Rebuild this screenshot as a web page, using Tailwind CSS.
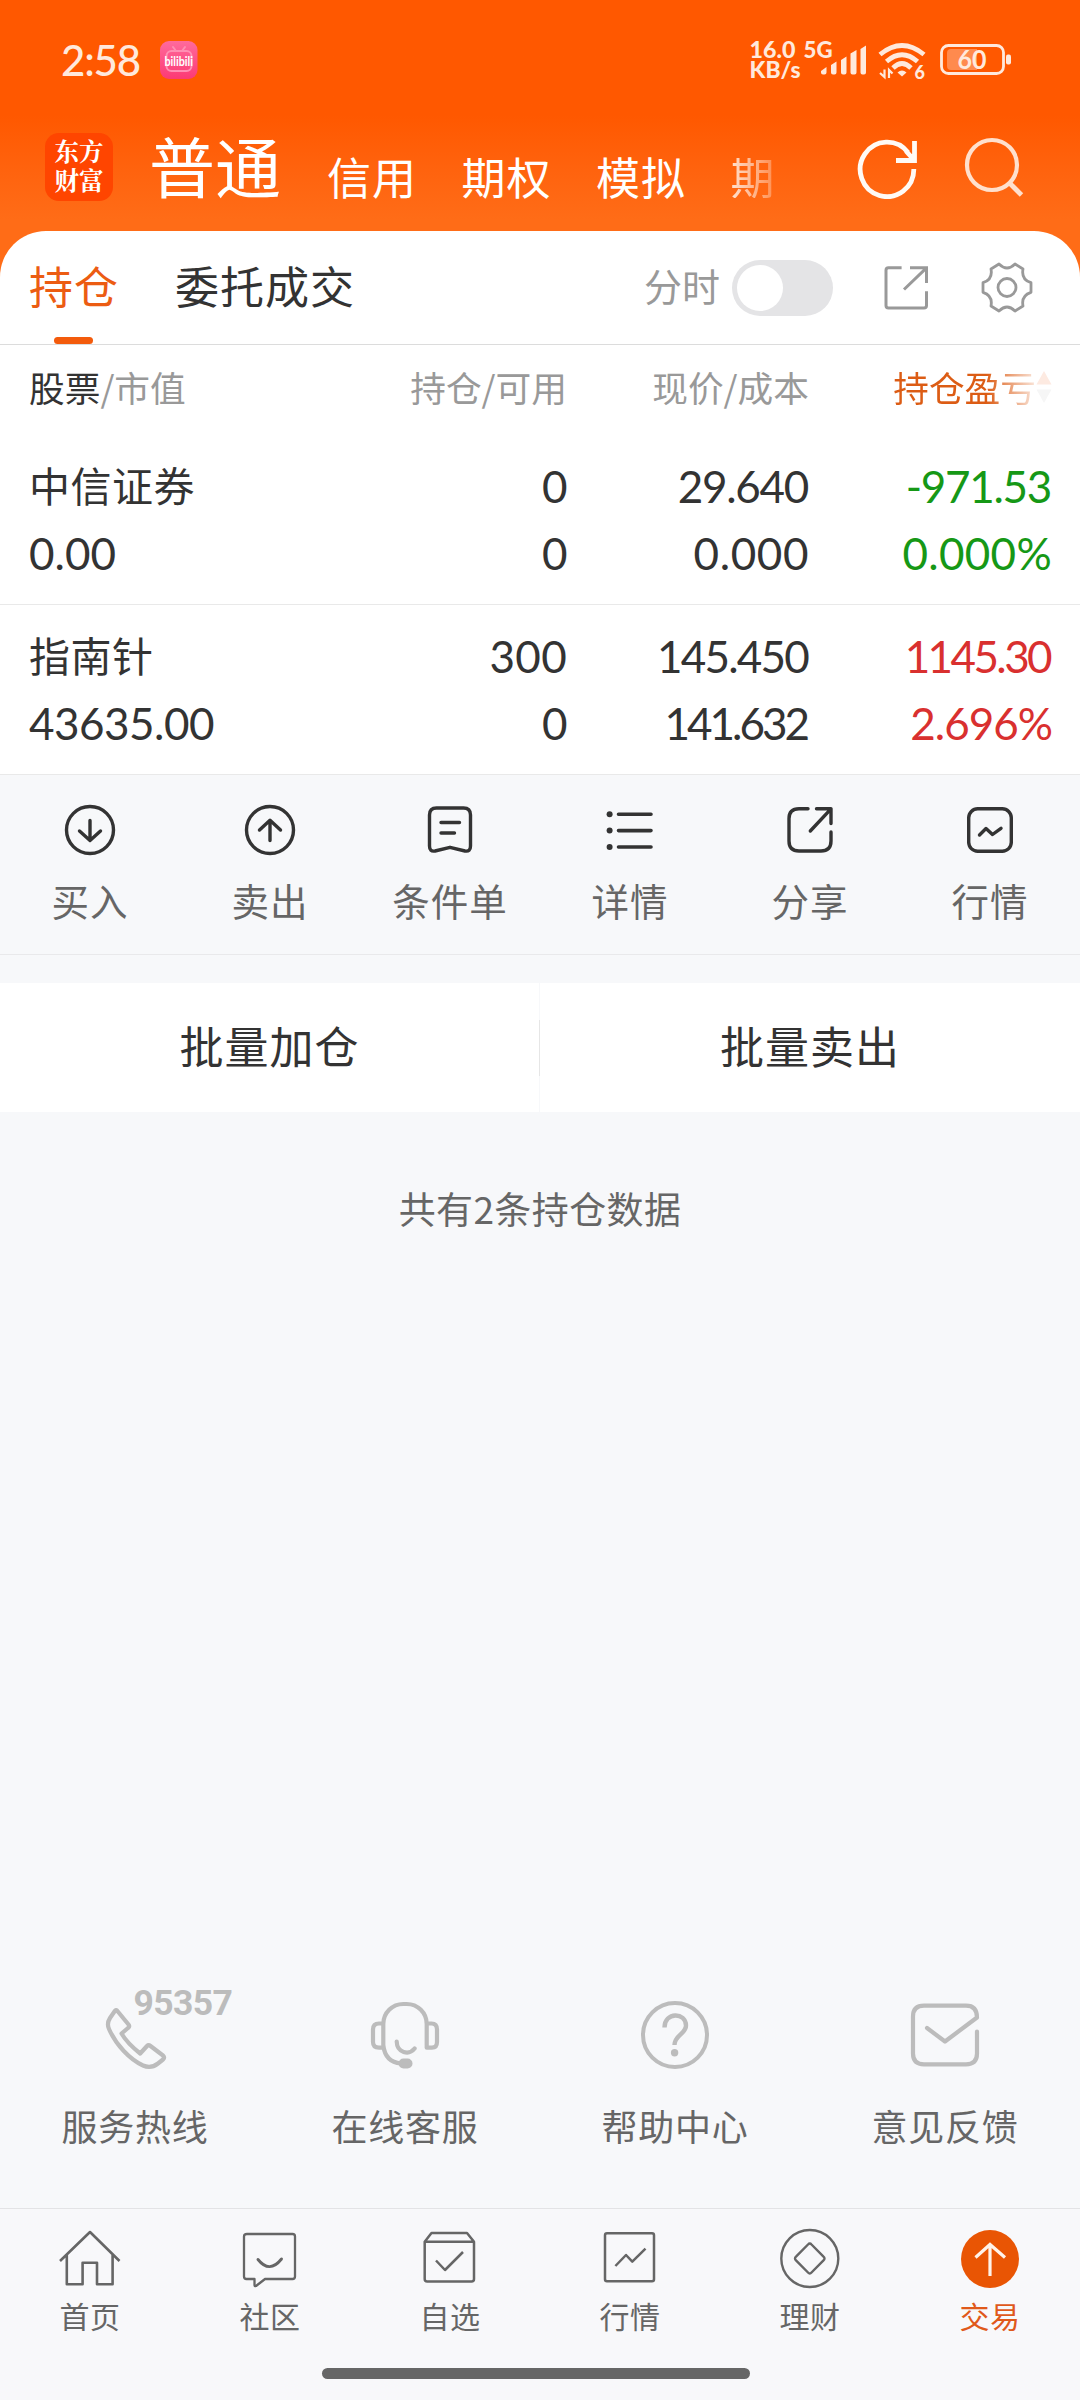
<!DOCTYPE html>
<html lang="zh-CN">
<head>
<meta charset="utf-8">
<title>持仓</title>
<script src="https://cdn.jsdelivr.net/npm/@tailwindcss/browser@4"></script>
</head>
<body class="bg-[#f7f8fa]">
<div class="flex h-[2400px] w-[1080px] flex-col overflow-hidden bg-[#f7f8fa] font-['Noto_Sans_CJK_SC',sans-serif] text-[#333] leading-none whitespace-nowrap">

  <header class="h-[231px] shrink-0 bg-linear-to-b from-[#ff5800] from-50% to-[#ff6c17] to-95%">
    <!-- status bar -->
    <div class="flex h-[120px] items-center pl-[61px] pr-[68px]">
      <span class="w-[99px] font-['Lato',sans-serif] text-[42px] font-medium tracking-[-1.2px] text-[#ffe9dc]">2:58</span>
      <svg class="overflow-visible" width="38" height="38" viewBox="0 0 38 38">
        <defs><linearGradient id="pk" x1="0" y1="0" x2="0" y2="1"><stop offset="0" stop-color="#ff6a9c"/><stop offset="1" stop-color="#fc3a74"/></linearGradient></defs>
        <rect width="37.500" height="38" rx="9" fill="url(#pk)"/>
        <g fill="none" stroke="#ff8fb3" stroke-width="2" stroke-linecap="round"><rect x="6.500" y="10" width="25" height="20" rx="5"/><path d="M13 6l3 4M25 6l-3 4"/></g>
        <text x="4.500" y="24.500" textLength="28.500" lengthAdjust="spacingAndGlyphs" font-family="Lato" font-size="14" font-weight="700" fill="#fff">bilibili</text>
      </svg>
      <svg class="ml-auto overflow-visible" width="264" height="44" viewBox="748 38 264 44" fill="#ffe9dc" font-family="Lato" font-weight="900">
        <text x="749.500" y="57.500" font-size="22.500" textLength="46" lengthAdjust="spacingAndGlyphs">16.0</text>
        <text x="749.500" y="78" font-size="22" textLength="51" lengthAdjust="spacingAndGlyphs">KB/s</text>
        <text x="803.500" y="57.500" font-size="22" textLength="29" lengthAdjust="spacingAndGlyphs">5G</text>
        <path d="M821 71l5.500-4v5.500a2 2 0 0 1-2 2h-1.500a2 2 0 0 1-2-2zM831 65l5.500-3.500v11a2 2 0 0 1-2 2h-1.500a2 2 0 0 1-2-2zM841 60l5.500-3.500v16a2 2 0 0 1-2 2h-1.500a2 2 0 0 1-2-2zM850.500 53.500l6-3.500v22.500a2 2 0 0 1-2 2h-2a2 2 0 0 1-2-2zM860.500 49l5.500-3.500v27a2 2 0 0 1-2 2h-1.500a2 2 0 0 1-2-2z"/>
        <g fill="none" stroke="#ffe9dc" stroke-width="4.800"><path d="M880 54.500Q902 36.500 924 54.500"/><path d="M886.500 61.500Q902 48 917.500 61.500"/><path d="M893 68Q902 59 911 68"/></g>
        <path d="M897.500 72.500q4.500-4 9 0l-4.500 4z"/>
        <path d="M884.500 69.500v7.500l-4.500-4M889 78v-8l3.500 3.500" fill="none" stroke="#ffe9dc" stroke-width="2.200"/>
        <text x="914.500" y="78.500" font-size="18">6</text>
        <rect x="941.500" y="45.500" width="62" height="28" rx="7" fill="none" stroke="#ffe9dc" stroke-width="2.800"/>
        <path d="M947 53a4 4 0 0 1 4-4h26v21h-26a4 4 0 0 1-4-4z" fill="#ff8a4e"/>
        <rect x="1006" y="54.500" width="5" height="10" rx="2"/>
        <text x="957.500" y="69" font-size="26" font-weight="700" textLength="29" lengthAdjust="spacingAndGlyphs">60</text>
      </svg>
    </div>
    <!-- account types -->
    <div class="flex h-[94px] items-center pl-[45px] pr-[55px] text-white">
      <div class="flex h-[68px] w-[68px] flex-col items-center justify-center rounded-[14px] bg-[#ff4500] pb-[4px] font-['Noto_Serif_CJK_SC','Noto_Sans_CJK_SC',serif] text-[24.5px] leading-[29px] font-bold"><span>东方</span><span>财富</span></div>
      <span class="ml-[36px] pb-[6px] text-[66px] leading-[66px]">普通</span>
      <nav class="ml-[46px] flex gap-[44.500px] pt-[18px] text-[44px] tracking-[1px]">
        <span>信用</span><span>期权</span><span>模拟</span>
        <span class="bg-linear-to-r from-white/80 to-white/25 bg-clip-text text-transparent">期</span>
      </nav>
      <svg class="ml-auto" width="170" height="64" viewBox="856 135 170 64" fill="none">
        <path d="M914.800 169A26.800 27.200 0 1 1 909 152.500M897 160.500H915.500V141M915 160L907 151" stroke="#fffaf5" stroke-width="4.800"/>
        <circle cx="993" cy="165" r="25" stroke="#ffe0cd" stroke-width="4.200"/><path d="M1010.500 183L1022.500 195" stroke="#ffe0cd" stroke-width="4.800"/>
      </svg>
    </div>
  </header>

  <div class="shrink-0 bg-[#ff6c17]">
    <div class="rounded-t-[46px] bg-white">
      <!-- tabs -->
      <div class="flex h-[114px] items-center border-b border-[#dcdcdc] pl-[29px] pr-[47px]">
        <div class="relative flex h-full items-center pb-[6px] text-[44px] tracking-[1px] text-[#ec5c12]">持仓<i class="absolute bottom-0 left-[25px] h-[7px] w-[39px] rounded-full bg-[#f35b0c]"></i></div>
        <span class="ml-[56px] pb-[6px] text-[44px] tracking-[1px]">委托成交</span>
        <span class="ml-auto pb-[5px] text-[38px]  text-[#999]">分时</span>
        <div class="ml-[12px] flex h-14 w-[101px] items-center rounded-full bg-[#e4e4e6] pl-[5px]"><i class="size-[46px] rounded-full bg-white"></i></div>
        <svg class="ml-[50px]" width="46" height="46" viewBox="883 264.500 46 46" fill="none" stroke="#999" stroke-width="3"><path d="M901.600 267.300H888.500a2.500 2.500 0 0 0-2.500 2.500V305a2.500 2.500 0 0 0 2.500 2.500H924a2.500 2.500 0 0 0 2.500-2.500V290.700M910 267.300H926.500V282.500M926.500 267.300L904 289"/></svg>
        <svg class="ml-[52px]" width="52" height="54" viewBox="-26 -26.500 52 54" fill="none" stroke="#999" stroke-width="2.800" stroke-linejoin="round"><path d="M24-4.800V4.800Q14 8 16 18.500L8 23.500Q0 15.500-8 23.500L-16 18.500Q-14 8-24 4.800V-4.800Q-14-8-16-18.500L-8-23.500Q0-15.500 8-23.500L16-18.500Q14-8 24-4.800Z"/><circle r="9"/></svg>
      </div>

      <!-- holdings table -->
      <div class="grid h-[84px] grid-cols-[238px_300px_242px_243px] items-center pl-[29px] text-[35.7px] text-[#999]">
        <div><span class="text-[#333]">股票</span>/市值</div>
        <div class="text-right">持仓/可用</div>
        <div class="text-right">现价/成本</div>
        <div class="flex items-center justify-end">
          <span class="bg-linear-to-r from-[#dc5c14] from-65% to-[#dc5c14]/15 bg-clip-text text-transparent">持仓盈亏</span>
          <svg width="16" height="34" viewBox="0 0 16 34"><path d="M8 1l7.500 13.500H.5z" fill="#fdeae1"/><path d="M8 33l7.500-13.500H.5z" fill="#f6f6f6"/></svg>
        </div>
      </div>

      <div class="grid h-[176px] grid-cols-[238px_300px_242px_243px] grid-rows-[67px_67px] items-center border-b border-[#e9e9e9] pl-[29px] pt-[23px] text-right font-['Lato',sans-serif] text-[44px] tracking-[-0.500px]">
        <span class="pb-[3px] text-left font-['Noto_Sans_CJK_SC',sans-serif] text-[41px] tracking-[0.500px]">中信证券</span><span>0</span><span class="pr-px tracking-[-1.3px]">29.640</span><span class="pr-px tracking-[-1.3px] text-[#169816]">-971.53</span>
        <span class="text-left tracking-normal">0.00</span><span>0</span><span class="tracking-[0.6px]">0.000</span><span class="tracking-[0.3px] text-[#169816]">0.000%</span>
      </div>
      <div class="grid h-[170px] grid-cols-[238px_300px_242px_243px] grid-rows-[67px_67px] items-center border-b border-[#e9e9e9] pl-[29px] pt-[17px] text-right font-['Lato',sans-serif] text-[44px] tracking-[-0.500px]">
        <span class="pb-[3px] text-left font-['Noto_Sans_CJK_SC',sans-serif] text-[41px] tracking-[0.500px]">指南针</span><span class="tracking-[0.3px]">300</span><span class="pr-px tracking-[-1.8px]">145.450</span><span class="pr-[2px] tracking-[-2.600px] text-[#d9302f]">1145.30</span>
        <span class="text-left">43635.00</span><span>0</span><span class="pr-[2px] tracking-[-3px]">141.632</span><span class="tracking-[-1px] text-[#d9302f]">2.696%</span>
      </div>
    </div>
  </div>

  <!-- row actions -->
  <div class="grid h-[180px] shrink-0 grid-cols-6 border-b border-[#e9e9eb] pt-[27px] text-[37.5px] tracking-[1px] text-[#666] *:flex *:flex-col *:items-center *:gap-[23px]">
    <div><svg width="56" height="56" viewBox="-28 -28 56 56" fill="none" stroke="#333" stroke-width="3.400" stroke-linecap="round" stroke-linejoin="round"><circle r="23.500"/><path d="M0-9.500V10M-10.500 1L0 10.500L10.500 1"/></svg><span>买入</span></div>
    <div><svg width="56" height="56" viewBox="-28 -28 56 56" fill="none" stroke="#333" stroke-width="3.400" stroke-linecap="round" stroke-linejoin="round"><circle r="23.500"/><path d="M0 10.500V-9.500M-10.500 0L0-9.800L10.500 0"/></svg><span>卖出</span></div>
    <div><svg width="56" height="56" viewBox="422 802 56 56" fill="none" stroke="#333" stroke-width="3.400" stroke-linecap="round" stroke-linejoin="round"><path d="M436.500 808H463.500Q470.500 808 470.500 815V846Q470.500 852 465 851L450 847.300L435 851Q429.500 852 429.500 846V815Q429.500 808 436.500 808ZM441 822.500H459.500M441 833H454.500"/></svg><span>条件单</span></div>
    <div><svg width="56" height="56" viewBox="602 802 56 56" fill="none" stroke="#333" stroke-width="3.600" stroke-linecap="round"><path d="M618.500 814.300H651M618.500 830.600H651M618.500 847H651"/><g fill="#333" stroke="none"><circle cx="609.600" cy="814.300" r="3"/><circle cx="609.600" cy="830.600" r="3"/><circle cx="609.600" cy="847" r="3"/></g></svg><span>详情</span></div>
    <div><svg width="56" height="56" viewBox="782 802 56 56" fill="none" stroke="#333" stroke-width="3.400" stroke-linecap="round" stroke-linejoin="round"><path d="M808 808.800H799Q789 808.800 789 818.800V841Q789 851 799 851H821Q831 851 831 841V832M816.500 808.800H831V823.500M831 808.800L810.300 831"/></svg><span>分享</span></div>
    <div><svg width="56" height="56" viewBox="962 802 56 56" fill="none" stroke="#333" stroke-width="3.400" stroke-linecap="round" stroke-linejoin="round"><rect x="968.700" y="808.800" width="42.600" height="42.500" rx="9"/><path d="M979.500 835L986 828.500L992.500 834.500L1001 828.300"/></svg><span>行情</span></div>
  </div>

  <!-- batch actions -->
  <div class="mt-[28px] flex h-[129px] shrink-0 items-center bg-white text-[44px] tracking-[1px]">
    <div class="flex h-full w-[539px] items-center justify-center pb-[6px]">批量加仓</div>
    <div class="flex h-full w-px items-center bg-[#f7f8fa]"><i class="h-14 w-px bg-[#e6e6e6]"></i></div>
    <div class="flex h-full flex-1 items-center justify-center pb-[6px]">批量卖出</div>
  </div>
  <p class="mt-[78px] text-center text-[37px] tracking-[0.400px] text-[#666]">共有2条持仓数据</p>

  <!-- service links -->
  <div class="mt-auto grid h-[224px] shrink-0 grid-cols-4 text-[36px] tracking-[0.700px] text-[#666] *:flex *:flex-col *:items-center *:gap-[19px]">
    <div><svg width="200" height="104" viewBox="35 1984 200 104" fill="none" stroke="#bcbcbc" stroke-width="4.200" stroke-linejoin="round"><path d="M117 2010.500L128.500 2024.500Q130 2026.500 128 2028L121.500 2033.500Q127 2043 140.200 2053.500L147 2046Q148.500 2044.500 150.500 2046L163 2055.500Q165 2057.500 163 2059.500L158 2063.500Q151 2069 143 2065.500C130 2059.500 116 2045 109 2029Q106.500 2023.500 110 2018L115 2010.800Q116 2009.500 117 2010.500Z"/><text x="133.500" y="2015" font-family="Roboto" font-size="35.500" font-weight="700" fill="#bcbcbc" stroke="none" textLength="100">95357</text></svg><span>服务热线</span></div>
    <div><svg width="104" height="104" viewBox="353 1984 104 104" fill="none" stroke="#bcbcbc" stroke-width="4.200" stroke-linecap="round" stroke-linejoin="round"><path d="M426.700 2047.700V2024A20 20 0 0 0 406.700 2004H403.300A20 20 0 0 0 383.300 2024V2045Q385 2062 401 2063.500M383 2023.500H379Q373 2023.500 373 2029.500V2042Q373 2047.700 379 2047.700H383M427 2023.500H431.500Q437 2023.500 437 2029.500V2042Q437 2047.700 432 2047.700H426.700M396.700 2041.500C397 2053 409 2055.500 414.600 2048.500"/><rect x="398.500" y="2058.500" width="14" height="10" rx="5" fill="#bcbcbc" stroke="none"/></svg><span>在线客服</span></div>
    <div><svg width="104" height="104" viewBox="623 1984 104 104" fill="none" stroke="#bcbcbc" stroke-width="4"><circle cx="675" cy="2035" r="32"/><path d="M664.500 2027.500C664.500 2011.500 686 2012 686 2025.500C686 2034 674.500 2035 674.500 2045" stroke-width="4.400"/><circle cx="674.600" cy="2052.700" r="3.700" fill="#bcbcbc" stroke="none"/></svg><span>帮助中心</span></div>
    <div><svg width="104" height="104" viewBox="893 1984 104 104" fill="none" stroke="#bcbcbc" stroke-width="4.200" stroke-linecap="round" stroke-linejoin="round"><path d="M977 2031.500V2053.500Q977 2064.300 966 2064.300H924Q913 2064.300 913 2053.500V2016.500Q913 2005.700 924 2005.700H966Q977 2005.700 977 2017.500L945 2041.500L927 2028"/></svg><span>意见反馈</span></div>
  </div>

  <!-- bottom navigation -->
  <footer class="h-[192px] shrink-0 border-t border-[#e3e3e5] bg-[#f8f8fa]">
    <nav class="grid h-[159px] grid-cols-6 pt-[15px] text-[30px] tracking-[0.500px] text-[#666] *:flex *:flex-col *:items-center *:gap-[6px]">
      <div><svg width="70" height="70" viewBox="55 2224 70 70" fill="none" stroke="#666" stroke-width="2.600" stroke-linejoin="round"><path d="M60 2261L90 2232L119.500 2261M66.800 2254.500V2284.300H82.600V2262.700H97V2284.300H112.600V2254.500"/></svg><span>首页</span></div>
      <div><svg width="70" height="70" viewBox="235 2224 70 70" fill="none" stroke="#666" stroke-width="2.300" stroke-linejoin="round"><path d="M247 2234H292.500Q295 2234 295 2236.500V2276.500Q295 2279 292.500 2279H265L256 2286Q254.500 2286.500 254.500 2285V2279H246.500Q244 2279 244 2276.500V2236.500Q244 2234 247 2234Z"/><path d="M258 2259.500Q269.500 2274 281.500 2259" stroke-width="2.900" stroke-linecap="round"/></svg><span>社区</span></div>
      <div><svg width="70" height="70" viewBox="415 2224 70 70" fill="none" stroke="#666" stroke-width="2.500" stroke-linejoin="round"><path d="M424.700 2241.800L431.500 2233H467L474 2241.800ZM424.700 2241.800V2279Q424.700 2281.500 427.200 2281.500H471.500Q474 2281.500 474 2279V2241.800M436 2260.500L445 2270L463 2252"/></svg><span>自选</span></div>
      <div><svg width="70" height="70" viewBox="595 2224 70 70" fill="none" stroke="#666" stroke-width="2.500" stroke-linejoin="round"><rect x="605" y="2233.300" width="49" height="48" rx="2"/><path d="M615.400 2266L626 2255L632.300 2261.700L645.500 2248.700"/></svg><span>行情</span></div>
      <div><svg width="70" height="70" viewBox="775 2224 70 70" fill="none" stroke="#666" stroke-width="2.400" stroke-linejoin="round"><circle cx="809.800" cy="2258.500" r="28.500"/><path d="M808 2244.500Q809.800 2242.500 811.500 2244.500L823.500 2256.700Q825.500 2258.500 823.500 2260.300L811.500 2272.500Q809.800 2274.500 808 2272.500L796 2260.300Q794 2258.500 796 2256.700Z"/></svg><span>理财</span></div>
      <div class="text-[#e0591a]"><svg width="70" height="70" viewBox="955 2224 70 70" fill="none" stroke="#fff3ea" stroke-width="3.200"><circle cx="990" cy="2259" r="29" fill="#e95504" stroke="none"/><path d="M990 2276V2245M975.500 2257.500L990 2244.500L1005 2257.500"/></svg><span>交易</span></div>
    </nav>
    <div class="ml-[322px] h-[11px] w-[428px] rounded-full bg-[#666]"></div>
  </footer>
</div>
</body>
</html>
